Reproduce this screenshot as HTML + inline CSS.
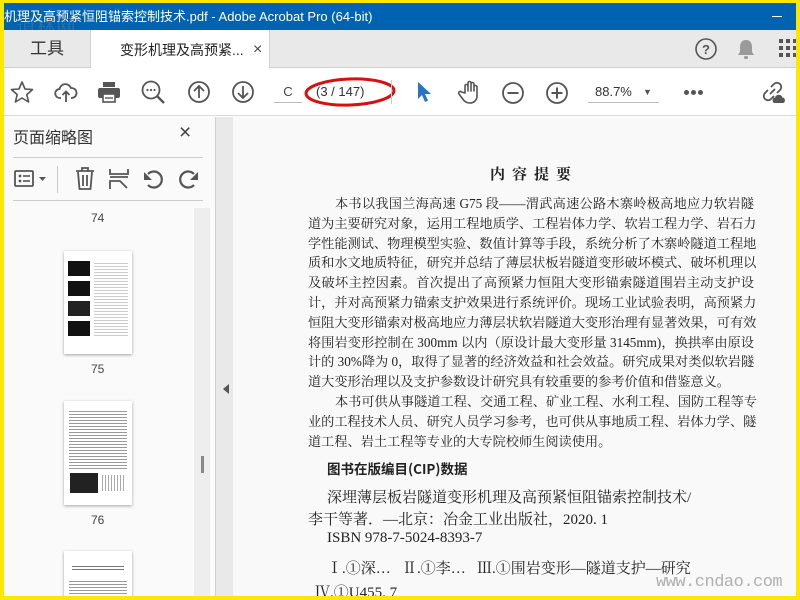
<!DOCTYPE html>
<html><head><meta charset="utf-8">
<style>
*{margin:0;padding:0;box-sizing:border-box}
body{width:800px;height:600px;overflow:hidden;background:#ffe800;font-family:"Liberation Sans","Noto Sans CJK SC",sans-serif;position:relative}
.abs{position:absolute}
#win{position:absolute;left:4px;top:3px;width:792px;height:593px;background:#fff;overflow:hidden}
.title{left:0;top:0;width:792px;height:27px;background:#0063b1;color:#fff;font-size:13px;line-height:27px;white-space:nowrap}
.tabs{left:0;top:27px;width:792px;height:38px;background:#e9e9e9;border-bottom:1px solid #d0d0d0}
.tb{left:0;top:65px;width:792px;height:48px;background:#fff;border-bottom:1px solid #d8d8d8}
.ic{position:absolute}
.doc{font-family:"Liberation Serif","Noto Serif CJK SC",serif;color:#222}
.para{left:304px;top:191px;width:446px;font-size:13.2px;line-height:19.8px;text-align:justify;text-align-last:justify}
.para p{height:19.8px;white-space:nowrap}
</style></head><body>
<div id="win">
<div class="abs title"><span>机理及高预紧恒阻锚索控制技术.pdf - Adobe Acrobat Pro (64-bit)</span>
<div class="abs" style="left:768px;top:13px;width:10px;height:1px;background:#fff"></div></div>
<div class="abs" style="left:12px;top:8px;font-size:20px;color:rgba(120,140,160,.35);font-family:'Noto Serif CJK SC',serif">道林网</div>
<div class="abs tabs">
 <div class="abs" style="left:0;top:0;width:87px;height:38px;border-right:1px solid #d0d0d0;font-size:17px;line-height:38px;text-align:center;color:#333">工具</div>
 <div class="abs" style="left:87px;top:0;width:179px;height:39px;background:#fff;border-right:1px solid #d0d0d0;font-size:14px;line-height:40px;color:#222;padding-left:29px">变形机理及高预紧...<span style="position:absolute;left:162px;font-size:16px;color:#444">×</span></div>
 <svg class="ic" style="left:691px;top:8px" width="22" height="22" viewBox="0 0 22 22"><circle cx="11" cy="11" r="10" fill="none" stroke="#555" stroke-width="1.6"/><text x="11" y="16" font-size="13" text-anchor="middle" fill="#555" font-family="Liberation Sans" font-weight="bold">?</text></svg>
 <svg class="ic" style="left:733px;top:8px" width="18" height="22" viewBox="0 0 18 22"><path d="M9 2c-4 0-6 3-6 7v5l-2 3h16l-2-3V9c0-4-2-7-6-7z" fill="#9a9a9a"/><rect x="7" y="18" width="4" height="3" rx="1.5" fill="#9a9a9a"/></svg>
 <svg class="ic" style="left:775px;top:9px" width="20" height="22"><g fill="#555"><rect x="0" y="0" width="4" height="4"/><rect x="7" y="0" width="4" height="4"/><rect x="14" y="0" width="4" height="4"/><rect x="0" y="7" width="4" height="4"/><rect x="7" y="7" width="4" height="4"/><rect x="14" y="7" width="4" height="4"/><rect x="0" y="14" width="4" height="4"/><rect x="7" y="14" width="4" height="4"/><rect x="14" y="14" width="4" height="4"/></g></svg>
</div>
<div class="abs tb">
 <svg class="ic" style="left:6px;top:12px" width="24" height="24" viewBox="0 0 24 24"><path d="M12 2l3 7 7.5.6-5.7 5 1.8 7.4L12 18l-6.6 4 1.8-7.4-5.7-5L9 9z" fill="none" stroke="#555" stroke-width="1.6" stroke-linejoin="round"/></svg>
 <svg class="ic" style="left:50px;top:12px" width="24" height="24" viewBox="0 0 24 24"><path d="M7 18H6a4.5 4.5 0 0 1-.5-9A6 6 0 0 1 17 8a4.5 4.5 0 0 1 1 10h-1M12 22v-10M8.5 15l3.5-3.5 3.5 3.5" fill="none" stroke="#555" stroke-width="1.8"/></svg>
 <svg class="ic" style="left:93px;top:12px" width="24" height="24" viewBox="0 0 24 24"><rect x="6" y="2" width="12" height="5" fill="#555"/><rect x="1" y="8" width="22" height="10" rx="2" fill="#555"/><rect x="6" y="14" width="12" height="8" fill="#fff" stroke="#555" stroke-width="1.6"/><line x1="8" y1="18" x2="16" y2="18" stroke="#555" stroke-width="1.4"/></svg>
 <svg class="ic" style="left:137px;top:12px" width="26" height="26" viewBox="0 0 26 26"><circle cx="10" cy="10" r="8.5" fill="none" stroke="#555" stroke-width="1.8"/><line x1="16" y1="16" x2="23" y2="23" stroke="#555" stroke-width="2.4"/><g fill="#555"><circle cx="6.5" cy="10" r="1.1"/><circle cx="10" cy="10" r="1.1"/><circle cx="13.5" cy="10" r="1.1"/></g></svg>
 <svg class="ic" style="left:183px;top:12px" width="24" height="24" viewBox="0 0 24 24"><circle cx="12" cy="12" r="10" fill="none" stroke="#555" stroke-width="1.8"/><path d="M12 18V6M7 11l5-5 5 5" fill="none" stroke="#555" stroke-width="1.8"/></svg>
 <svg class="ic" style="left:227px;top:12px" width="24" height="24" viewBox="0 0 24 24"><circle cx="12" cy="12" r="10" fill="none" stroke="#555" stroke-width="1.8"/><path d="M12 6v12M7 13l5 5 5-5" fill="none" stroke="#555" stroke-width="1.8"/></svg>
 <div class="abs" style="left:270px;top:14px;width:28px;height:21px;border-bottom:1px solid #bbb;font-size:13px;color:#444;text-align:center;line-height:20px">C</div>
 <div class="abs" style="left:312px;top:16px;font-size:13px;color:#333">(3 / 147)</div>
 <svg class="ic" style="left:298px;top:8px" width="96" height="34" viewBox="0 0 96 34"><ellipse cx="48" cy="16" rx="44" ry="13" fill="none" stroke="#d51010" stroke-width="3" transform="rotate(-2 48 16)"/></svg>
 <div class="abs" style="left:387px;top:12px;width:1px;height:24px;background:#ccc"></div>
 <svg class="ic" style="left:412px;top:13px" width="16" height="22" viewBox="0 0 16 22"><path d="M2 1v17l4-4 3 7 3-1.5-3-6.5h6z" fill="#2a73c4"/></svg>
 <svg class="ic" style="left:454px;top:11px" width="26" height="26" viewBox="0 0 26 26"><path d="M7 14V7a1.5 1.5 0 0 1 3 0v5V4a1.5 1.5 0 0 1 3 0v8V5a1.5 1.5 0 0 1 3 0v7V8a1.5 1.5 0 0 1 3 0v9c0 4-3 7-7 7s-6-2-8-5l-3-4a1.5 1.5 0 0 1 2.5-2z" fill="none" stroke="#555" stroke-width="1.6" stroke-linejoin="round"/></svg>
 <svg class="ic" style="left:497px;top:13px" width="24" height="24" viewBox="0 0 24 24"><circle cx="12" cy="12" r="10" fill="none" stroke="#555" stroke-width="1.8"/><line x1="6.5" y1="12" x2="17.5" y2="12" stroke="#555" stroke-width="2"/></svg>
 <svg class="ic" style="left:541px;top:13px" width="24" height="24" viewBox="0 0 24 24"><circle cx="12" cy="12" r="10" fill="none" stroke="#555" stroke-width="1.8"/><path d="M6.5 12h11M12 6.5v11" stroke="#555" stroke-width="2"/></svg>
 <div class="abs" style="left:584px;top:14px;width:71px;height:21px;border-bottom:1px solid #bbb;font-size:13px;color:#333;padding-left:7px;line-height:20px">88.7%<span style="position:absolute;left:55px;top:0;font-size:9px;color:#555">▼</span></div>
 <div class="abs" style="left:680px;top:22px;width:5px;height:5px;border-radius:50%;background:#555;box-shadow:7px 0 #555,14px 0 #555"></div>
 <svg class="ic" style="left:756px;top:11px" width="26" height="26" viewBox="0 0 26 26"><path d="M11 8l3-3a4 4 0 0 1 6 6l-3 3M14 17l-3 3a4 4 0 0 1-6-6l3-3M10 15l5-5" fill="none" stroke="#555" stroke-width="1.8"/><path d="M14 24a3 3 0 0 1 1-5.5 4 4 0 0 1 7.5 0 3 3 0 0 1 1 5.5z" fill="#555"/></svg>
</div>
<!-- left panel -->
<div class="abs" style="left:0;top:114px;width:212px;height:479px;background:#fafafa;border-right:1px solid #cfcfcf"></div>
<div class="abs" style="left:9px;top:121px;font-size:16px;color:#333">页面缩略图</div>
<div class="abs" style="left:175px;top:118px;font-size:21px;color:#444">×</div>
<div class="abs" style="left:9px;top:154px;width:190px;height:1px;background:#ccc"></div>
<svg class="ic" style="left:10px;top:166px" width="36" height="20"><rect x="1" y="2" width="18" height="15" rx="1" fill="none" stroke="#555" stroke-width="1.8"/><circle cx="6" cy="7" r="1.4" fill="#555"/><circle cx="6" cy="12" r="1.4" fill="#555"/><line x1="9" y1="7" x2="16" y2="7" stroke="#555" stroke-width="1.6"/><line x1="9" y1="12" x2="16" y2="12" stroke="#555" stroke-width="1.6"/><path d="M25 8h7l-3.5 4z" fill="#555"/></svg>
<div class="abs" style="left:53px;top:163px;width:1px;height:27px;background:#ccc"></div>
<svg class="ic" style="left:70px;top:164px" width="22" height="24"><path d="M2 4h18M8 4V1h6v3M4 5l1.5 17h11L18 5M9 8v11M13 8v11" fill="none" stroke="#555" stroke-width="1.8"/></svg>
<svg class="ic" style="left:105px;top:165px" width="22" height="22"><path d="M1 1v5h18V1M1 9h18M1 21v-8h10l7 7" fill="none" stroke="#555" stroke-width="1.8"/></svg>
<svg class="ic" style="left:138px;top:164px" width="24" height="24"><path d="M6 18a8 8 0 1 0 0-11" fill="none" stroke="#555" stroke-width="2.2"/><path d="M2 3v8h8z" fill="#555" transform="translate(0 2)"/></svg>
<svg class="ic" style="left:172px;top:164px" width="24" height="24"><path d="M18 18a8 8 0 1 1 0-11" fill="none" stroke="#555" stroke-width="2.2"/><path d="M22 5v8h-8z" fill="#555"/></svg>
<div class="abs" style="left:9px;top:197px;width:190px;height:1px;background:#ccc"></div>
<div class="abs" style="left:190px;top:205px;width:16px;height:388px;background:#eee"></div>
<div class="abs" style="left:197px;top:453px;width:3px;height:17px;background:#888"></div>
<div class="abs" style="left:87px;top:208px;font-size:12px;color:#444">74</div>
<div class="abs" style="left:60px;top:248px;width:68px;height:103px;background:#fff;box-shadow:0 1px 3px rgba(0,0,0,.35)">
 <div class="abs" style="left:4px;top:10px;width:22px;height:15px;background:#111"></div>
 <div class="abs" style="left:4px;top:30px;width:22px;height:15px;background:#111"></div>
 <div class="abs" style="left:4px;top:50px;width:22px;height:15px;background:#222"></div>
 <div class="abs" style="left:4px;top:70px;width:22px;height:15px;background:#111"></div>
 <div class="abs" style="left:30px;top:10px;width:34px;height:75px;background:repeating-linear-gradient(#fff 0 2px,#ccc 2px 3px)"></div>
</div>
<div class="abs" style="left:87px;top:359px;font-size:12px;color:#444">75</div>
<div class="abs" style="left:60px;top:398px;width:68px;height:104px;background:#fff;box-shadow:0 1px 3px rgba(0,0,0,.35)">
 <div class="abs" style="left:5px;top:8px;width:58px;height:62px;background:repeating-linear-gradient(#fff 0 2px,#999 2px 3px)"></div>
 <div class="abs" style="left:6px;top:72px;width:28px;height:20px;background:#222"></div>
 <div class="abs" style="left:36px;top:74px;width:26px;height:16px;background:repeating-linear-gradient(90deg,#fff 0 2px,#aaa 2px 3px)"></div>
</div>
<div class="abs" style="left:87px;top:510px;font-size:12px;color:#444">76</div>
<div class="abs" style="left:60px;top:548px;width:68px;height:60px;background:#fff;box-shadow:0 1px 3px rgba(0,0,0,.35)">
 <div class="abs" style="left:8px;top:13px;width:52px;height:8px;background:repeating-linear-gradient(#fff 0 2px,#777 2px 3px)"></div>
 <div class="abs" style="left:5px;top:28px;width:58px;height:24px;background:repeating-linear-gradient(#fff 0 2px,#999 2px 3px)"></div>
</div>
<!-- divider -->
<div class="abs" style="left:212px;top:114px;width:17px;height:479px;background:#e9e9e9"></div>
<div class="abs" style="left:219px;top:381px;width:0;height:0;border-top:5px solid transparent;border-bottom:5px solid transparent;border-right:6px solid #555"></div>
<!-- document -->
<div class="abs" style="left:229px;top:114px;width:563px;height:479px;background:#f9f9f9"></div>
<div class="abs doc" style="left:486px;top:160px;font-size:15px;font-weight:bold;letter-spacing:7px">内容提要</div>
<div class="abs doc para">
<p style="padding-left:27px">本书以我国兰海高速 G75 段——渭武高速公路木寨岭极高地应力软岩隧</p>
<p>道为主要研究对象，运用工程地质学、工程岩体力学、软岩工程力学、岩石力</p>
<p>学性能测试、物理模型实验、数值计算等手段，系统分析了木寨岭隧道工程地</p>
<p>质和水文地质特征，研究并总结了薄层状板岩隧道变形破坏模式、破坏机理以</p>
<p>及破坏主控因素。首次提出了高预紧力恒阻大变形锚索隧道围岩主动支护设</p>
<p>计，并对高预紧力锚索支护效果进行系统评价。现场工业试验表明，高预紧力</p>
<p>恒阻大变形锚索对极高地应力薄层状软岩隧道大变形治理有显著效果，可有效</p>
<p>将围岩变形控制在 300mm 以内（原设计最大变形量 3145mm)，换拱率由原设</p>
<p>计的 30%降为 0，取得了显著的经济效益和社会效益。研究成果对类似软岩隧</p>
<p style="text-align-last:left">道大变形治理以及支护参数设计研究具有较重要的参考价值和借鉴意义。</p>
<p style="padding-left:27px">本书可供从事隧道工程、交通工程、矿业工程、水利工程、国防工程等专</p>
<p>业的工程技术人员、研究人员学习参考，也可供从事地质工程、岩体力学、隧</p>
<p style="text-align-last:left">道工程、岩土工程等专业的大专院校师生阅读使用。</p>
</div>
<div class="abs doc" style="left:323px;top:455px;font-size:13.5px;font-weight:bold;font-family:'Noto Sans CJK SC',sans-serif">图书在版编目(CIP)数据</div>
<div class="abs doc" style="left:323px;top:483px;font-size:15px;white-space:nowrap">深埋薄层板岩隧道变形机理及高预紧恒阻锚索控制技术/</div>
<div class="abs doc" style="left:304px;top:505px;font-size:15px;white-space:nowrap">李干等著．—北京：冶金工业出版社，2020. 1</div>
<div class="abs doc" style="left:323px;top:527px;font-size:15px;white-space:nowrap">ISBN 978-7-5024-8393-7</div>
<div class="abs doc" style="left:323px;top:554px;font-size:15px;white-space:nowrap">Ⅰ.①深…&nbsp;&nbsp;&nbsp;Ⅱ.①李…&nbsp;&nbsp;&nbsp;Ⅲ.①围岩变形—隧道支护—研究</div>
<div class="abs doc" style="left:311px;top:578px;font-size:15px;white-space:nowrap">Ⅳ.①U455. 7</div>
<div class="abs" style="left:652px;top:570px;font-size:17px;color:#b0b0b0;font-family:'Liberation Mono',monospace;letter-spacing:-0.5px">www.cndao.com</div>
</div>
</body></html>
